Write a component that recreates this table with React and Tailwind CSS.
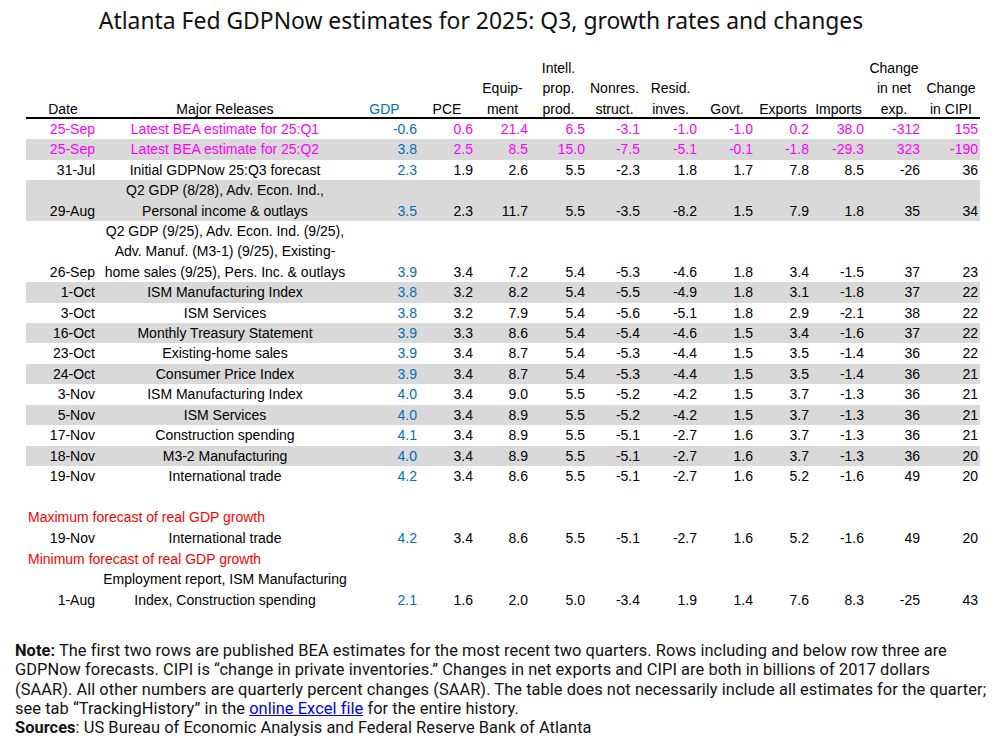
const COLS = "grid grid-cols-[74px_250px_69px_56px_55px_57px_55px_57px_56px_56px_55px_56px_58px]";

const HEADERS = [
  ["Equip-", "ment"],
  ["Intell.", "prop.", "prod."],
  ["Nonres.", "struct."],
  ["Resid.", "inves."],
  ["Govt."],
  ["Exports"],
  ["Imports"],
  ["Change", "in net", "exp."],
  ["Change", "in CIPI"],
];

const ROWS = [
  { d: "25-Sep", r: ["Latest BEA estimate for 25:Q1"], v: ["-0.6", "0.6", "21.4", "6.5", "-3.1", "-1.0", "-1.0", "0.2", "38.0", "-312", "155"], pink: true },
  { d: "25-Sep", r: ["Latest BEA estimate for 25:Q2"], v: ["3.8", "2.5", "8.5", "15.0", "-7.5", "-5.1", "-0.1", "-1.8", "-29.3", "323", "-190"], pink: true, grey: true },
  { d: "31-Jul", r: ["Initial GDPNow 25:Q3 forecast"], v: ["2.3", "1.9", "2.6", "5.5", "-2.3", "1.8", "1.7", "7.8", "8.5", "-26", "36"] },
  { d: "29-Aug", r: ["Q2 GDP (8/28), Adv. Econ. Ind.,", "Personal income & outlays"], v: ["3.5", "2.3", "11.7", "5.5", "-3.5", "-8.2", "1.5", "7.9", "1.8", "35", "34"], grey: true },
  { d: "26-Sep", r: ["Q2 GDP (9/25), Adv. Econ. Ind. (9/25),", "Adv. Manuf. (M3-1) (9/25), Existing-", "home sales (9/25), Pers. Inc. & outlays"], v: ["3.9", "3.4", "7.2", "5.4", "-5.3", "-4.6", "1.8", "3.4", "-1.5", "37", "23"] },
  { d: "1-Oct", r: ["ISM Manufacturing Index"], v: ["3.8", "3.2", "8.2", "5.4", "-5.5", "-4.9", "1.8", "3.1", "-1.8", "37", "22"], grey: true },
  { d: "3-Oct", r: ["ISM Services"], v: ["3.8", "3.2", "7.9", "5.4", "-5.6", "-5.1", "1.8", "2.9", "-2.1", "38", "22"] },
  { d: "16-Oct", r: ["Monthly Treasury Statement"], v: ["3.9", "3.3", "8.6", "5.4", "-5.4", "-4.6", "1.5", "3.4", "-1.6", "37", "22"], grey: true },
  { d: "23-Oct", r: ["Existing-home sales"], v: ["3.9", "3.4", "8.7", "5.4", "-5.3", "-4.4", "1.5", "3.5", "-1.4", "36", "22"] },
  { d: "24-Oct", r: ["Consumer Price Index"], v: ["3.9", "3.4", "8.7", "5.4", "-5.3", "-4.4", "1.5", "3.5", "-1.4", "36", "21"], grey: true },
  { d: "3-Nov", r: ["ISM Manufacturing Index"], v: ["4.0", "3.4", "9.0", "5.5", "-5.2", "-4.2", "1.5", "3.7", "-1.3", "36", "21"] },
  { d: "5-Nov", r: ["ISM Services"], v: ["4.0", "3.4", "8.9", "5.5", "-5.2", "-4.2", "1.5", "3.7", "-1.3", "36", "21"], grey: true },
  { d: "17-Nov", r: ["Construction spending"], v: ["4.1", "3.4", "8.9", "5.5", "-5.1", "-2.7", "1.6", "3.7", "-1.3", "36", "21"] },
  { d: "18-Nov", r: ["M3-2 Manufacturing"], v: ["4.0", "3.4", "8.9", "5.5", "-5.1", "-2.7", "1.6", "3.7", "-1.3", "36", "20"], grey: true },
  { d: "19-Nov", r: ["International trade"], v: ["4.2", "3.4", "8.6", "5.5", "-5.1", "-2.7", "1.6", "5.2", "-1.6", "49", "20"] },
];

const MAX_ROW = { d: "19-Nov", r: ["International trade"], v: ["4.2", "3.4", "8.6", "5.5", "-5.1", "-2.7", "1.6", "5.2", "-1.6", "49", "20"] };
const MIN_ROW = { d: "1-Aug", r: ["Employment report, ISM Manufacturing", "Index, Construction spending"], v: ["2.1", "1.6", "2.0", "5.0", "-3.4", "1.9", "1.4", "7.6", "8.3", "-25", "43"] };

function Row({ row }) {
  const txt = row.pink ? "text-[#ff00ff]" : "text-black";
  return (
    <div className={`${COLS} items-end ${row.grey ? "bg-[#d9d9d9]" : ""}`}>
      <div className={`text-right pr-[5px] ${txt}`}>{row.d}</div>
      <div className={`text-center whitespace-nowrap ${txt}`}>
        {row.r.map(l => <div key={l}>{l}</div>)}
      </div>
      {row.v.map((n, i) => (
        <div key={i} className={`text-right pr-[2px] ${i === 0 ? "text-[#0070c0]" : txt}`}>{n}</div>
      ))}
    </div>
  );
}

export default function App() {
  return (
    <div className="w-[992px] h-[741px] bg-white overflow-hidden">
      <h1 className="pt-[6px] pr-[30px] h-[58px] text-center text-[22.9px] leading-[30px] text-[#111] whitespace-nowrap" style={{ fontFamily: "'Noto Sans', sans-serif" }}>
        Atlanta Fed GDPNow estimates for 2025: Q3, growth rates and changes
      </h1>

      <div className="ml-[26px] w-[954px] text-[14px] leading-[20.4px]" style={{ fontFamily: "'Liberation Sans', Arial, sans-serif" }}>
        <div className={`${COLS} items-end border-b-2 border-black h-[61px]`}>
          <div className="text-center">Date</div>
          <div className="text-center">Major Releases</div>
          <div className="text-center text-[#0070c0]">GDP</div>
          <div className="text-center">PCE</div>
          {HEADERS.map((h, i) => (
            <div key={i} className="text-center whitespace-nowrap">
              {h.map(l => <div key={l}>{l}</div>)}
            </div>
          ))}
        </div>

        {ROWS.map((r, i) => <Row key={i} row={r} />)}
        <div className="h-[21px]" />
        <div className="leading-[20.7px]">
          <div className="pl-[2px] text-[#ff0000]">Maximum forecast of real GDP growth</div>
          <Row row={MAX_ROW} />
          <div className="pl-[2px] text-[#ff0000]">Minimum forecast of real GDP growth</div>
          <Row row={MIN_ROW} />
        </div>
      </div>

      <div className="mt-[30px] ml-[15px] text-[16.4px] leading-[19.4px] tracking-[0.06px] text-[#111] whitespace-nowrap" style={{ fontFamily: "Roboto, sans-serif" }}>
        <div><b>Note:</b> The first two rows are published BEA estimates for the most recent two quarters. Rows including and below row three are</div>
        <div>GDPNow forecasts. CIPI is “change in private inventories.” Changes in net exports and CIPI are both in billions of 2017 dollars</div>
        <div>(SAAR). All other numbers are quarterly percent changes (SAAR). The table does not necessarily include all estimates for the quarter;</div>
        <div>see tab “TrackingHistory” in the <span className="text-[#0000ee] underline">online Excel file</span> for the entire history.</div>
        <div><b>Sources</b>: US Bureau of Economic Analysis and Federal Reserve Bank of Atlanta</div>
      </div>
    </div>
  );
}
